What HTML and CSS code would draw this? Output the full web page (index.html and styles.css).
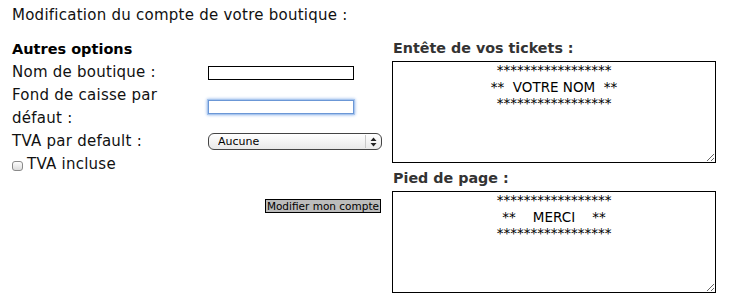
FILE: index.html
```html
<!DOCTYPE html>
<html lang="fr">
<head>
    <meta charset="utf-8" />
    <title>Modification du compte</title>
    <link rel="stylesheet" href="styles.css">
</head>
<body>
<p class="title">Modification du compte de votre boutique :</p>

<form class="account">
    <div class="options">
        <h3>Autres options</h3>
        <div class="row">
            <label for="nom">Nom de boutique :</label>
            <input type="text" id="nom" class="field">
        </div>
        <div class="row">
            <label for="fond">Fond de caisse par défaut :</label>
            <input type="text" id="fond" class="field focused">
        </div>
        <div class="row">
            <label for="tva">TVA par default :</label>
            <span class="select-wrap">
                <select id="tva">
                    <option>Aucune</option>
                    <option>5,5 %</option>
                    <option>19,6 %</option>
                </select>
                <svg class="arrows" width="7" height="10" viewBox="0 0 7 10">
                    <path d="M3.5 0.5 L6.5 4 L0.5 4 Z M0.5 6 L6.5 6 L3.5 9.5 Z" fill="#222"/>
                </svg>
            </span>
        </div>
        <label class="check"><input type="checkbox">TVA incluse</label>
        <div class="actions">
            <button type="submit">Modifier mon compte</button>
        </div>
    </div>

    <div class="tickets">
        <h4>Entête de vos tickets :</h4>
        <textarea>*****************
**  VOTRE NOM  **
*****************</textarea>
        <h4>Pied de page :</h4>
        <textarea>*****************
**    MERCI    **
*****************</textarea>
    </div>
</form>
</body>
</html>
```

FILE: styles.css
```css
body {
    margin: 0;
    padding: 4px 12px;
    font-family: "DejaVu Sans", Verdana, sans-serif;
    font-size: 15px;
    letter-spacing: 0.25px;
    color: #111;
    background: #fff;
}

.title {
    margin: 0 0 12px;
    line-height: 22px;
}

.account {
    display: grid;
    grid-template-columns: 370px 324px;
    column-gap: 10px;
    align-items: start;
}

h3 {
    margin: 0;
    font-size: 14.5px;
    letter-spacing: 0;
    line-height: 23px;
    color: #000;
}

.row {
    display: grid;
    grid-template-columns: 196px auto;
    align-items: center;
    line-height: 23px;
}
.row label {
    padding-right: 12px;
}

.field {
    box-sizing: border-box;
    width: 146px;
    height: 14px;
    margin: 0;
    padding: 0 2px;
    border: 1px solid #000;
    font-size: 11px;
}
.field:focus,
.field.focused {
    outline: none;
    border-color: #6b97d6;
    box-shadow: 0 0 0 1px #a9c6ee, 0 0 3px 1px #8db4ea;
}

.select-wrap {
    position: relative;
    display: flex;
    width: 174px;
    height: 17px;
    line-height: normal;
}
.select-wrap select {
    appearance: none;
    box-sizing: border-box;
    width: 100%;
    height: 17px;
    margin: 0;
    padding: 0 20px 0 9px;
    border: 1px solid #444;
    border-radius: 6px;
    background: linear-gradient(#fff, #e9e9e9);
    font-family: inherit;
    font-size: 11px;
    letter-spacing: 0;
    color: #000;
}
.select-wrap::before {
    content: "";
    position: absolute;
    top: 2px;
    bottom: 2px;
    right: 16px;
    border-left: 1px solid #c8c8c8;
}
.arrows {
    position: absolute;
    top: 4px;
    right: 5px;
    pointer-events: none;
}

.check {
    display: flex;
    align-items: center;
    gap: 4px;
    line-height: 23px;
}
.check input {
    appearance: none;
    width: 11px;
    height: 10px;
    margin: 2px 0 0;
    border: 1px solid #8a8a8a;
    border-radius: 3px;
    background: linear-gradient(#fdfdfd, #dcdcdc);
}

.actions {
    display: flex;
    justify-content: flex-end;
    padding-top: 23px;
    padding-right: 1px;
}
.actions button {
    margin: 0;
    padding: 0 1px;
    height: 14px;
    border: 1px solid #000;
    border-radius: 0;
    background: #bcbcbc;
    font-family: inherit;
    font-size: 10.5px;
    letter-spacing: 0;
    line-height: 12px;
    color: #000;
}

.tickets {
    display: flex;
    flex-direction: column;
    margin-top: -1px;
}
h4 {
    margin: 0;
    font-size: 14.3px;
    letter-spacing: 0;
    line-height: 22px;
    color: #333;
    padding-left: 1px;
}
.tickets textarea {
    box-sizing: border-box;
    width: 324px;
    height: 102px;
    margin: 2px 0 4px;
    padding: 0 2px;
    border: 1px solid #000;
    font-family: inherit;
    font-size: 13.5px;
    letter-spacing: 0;
    line-height: 16.5px;
    text-align: center;
    color: #000;
    resize: both;
}
```
